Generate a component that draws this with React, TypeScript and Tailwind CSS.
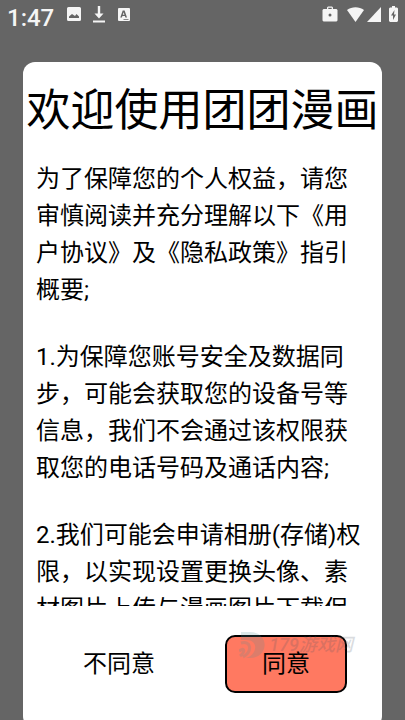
const paragraphs = [
  "为了保障您的个人权益，请您审慎阅读并充分理解以下《用户协议》及《隐私政策》指引概要;",
  "1.为保障您账号安全及数据同步，可能会获取您的设备号等信息，我们不会通过该权限获取您的电话号码及通话内容;",
  "2.我们可能会申请相册(存储)权限，以实现设置更换头像、素材图片上传与漫画图片下载保",
];

function StatusBar() {
  return (
    <header className="flex h-7 shrink-0 items-center justify-between px-[7px] text-[#f5f5f5]">
      <div className="flex items-center">
        <span className="w-[46px] pt-2 text-2xl leading-6 font-medium">1:47</span>
        <svg className="ml-[14px] h-[14px] w-[14px]" viewBox="0 0 14 14" fill="currentColor">
          <path fillRule="evenodd" d="M1.5 0h11A1.5 1.5 0 0 1 14 1.5v11a1.5 1.5 0 0 1-1.5 1.5h-11A1.5 1.5 0 0 1 0 12.5v-11A1.5 1.5 0 0 1 1.5 0zM2 11h10V9.500L9.500 7 8 9 6.500 8 5 7 2 9.500z" />
        </svg>
        <svg className="ml-3 h-[17px] w-[12px]" viewBox="0 0 12 17" fill="currentColor">
          <path d="M4.800 0h2.400v7.500H10.500L6 12.500 1.500 7.500h3.300zM0 14.500h12v2H0z" />
        </svg>
        <svg className="ml-[13px] h-[13px] w-[12px]" viewBox="0 0 12 13" fill="currentColor">
          <path fillRule="evenodd" d="M1 0h10a1 1 0 0 1 1 1v11a1 1 0 0 1-1 1H1a1 1 0 0 1-1-1V1a1 1 0 0 1 1-1zM4.700 2.500 2.300 9.500h1.600l.5-1.600h2.500l.5 1.600H9L6.600 2.500zM5.600 4.300l.9 2.400H4.800zM5.500 11v.8h5V11z" />
        </svg>
      </div>
      <div className="flex items-center">
        <svg className="h-4 w-4" viewBox="0 0 16 16" fill="currentColor">
          <path fillRule="evenodd" d="M5 3V1.500L6 .5h4l1 1V3h3.500l1 1v10.500l-1 1h-13l-1-1V4l1-1zM6.300 3h3.400V1.800H6.300zM8 7.500a1.500 1.500 0 1 0 0 3 1.500 1.500 0 0 0 0-3z" />
        </svg>
        <svg className="ml-[9px] h-[15px] w-[17px]" viewBox="0 0 17 15" fill="currentColor">
          <path d="M0 3C5-.8 12-.8 17 3L8.500 15z" />
        </svg>
        <svg className="ml-[3px] h-[15px] w-[14px]" viewBox="0 0 14 15" fill="currentColor">
          <path d="M14 0v15H0z" />
        </svg>
        <svg className="ml-2 h-4 w-[9px]" viewBox="0 0 9 16" fill="currentColor">
          <path fillRule="evenodd" d="M3 0h3v1.500h2l1 1V15l-1 1H1l-1-1V2.500l1-1h2zM5.500 4 2 9.500h2V14l3-5.500H5z" />
        </svg>
      </div>
    </header>
  );
}

function Watermark() {
  return (
    <div className="pointer-events-none absolute -top-1 right-[29px] flex items-center gap-1 text-gray-600 opacity-20">
      <svg className="h-7 w-[26px]" viewBox="0 0 26 28">
        <path d="M2 1h9c20 0 19 26 0 26H7c12-4 13-19-1-18H2z" fill="#4f8f94" />
        <path d="M2 12c10-3 12 8 2 14M0 20c5-4 7 0 1 5" fill="none" stroke="#4f8f94" strokeWidth="3" />
      </svg>
      <span className="text-lg leading-7 font-medium italic">179游戏网</span>
    </div>
  );
}

export default function App() {
  return (
    <div
      lang="zh-CN"
      className="flex h-screen flex-col overflow-hidden bg-[#656565] font-['Roboto','Noto_Sans_CJK_SC',sans-serif] text-black"
    >
      <StatusBar />
      <main className="mx-[23px] mt-[34px] -mb-2 flex min-h-0 flex-1 flex-col rounded-xl bg-white">
        <h1 className="pt-[19px] text-center text-[44px] leading-[60px] whitespace-nowrap">欢迎使用团团漫画</h1>
        <div className="mt-5 min-h-0 flex-1 space-y-[30px] overflow-hidden px-[13px] text-2xl leading-[37px]">
          {paragraphs.map((text) => (
            <p key={text}>{text}</p>
          ))}
        </div>
        <div className="relative mt-[29px] mb-[35px] flex justify-between px-[35px] text-2xl">
          <button type="button" className="h-[58px] w-[122px] rounded-[10px]">
            不同意
          </button>
          <button type="button" className="h-[58px] w-[122px] rounded-[10px] border-2 border-black bg-[#ff7961]">
            同意
          </button>
          <Watermark />
        </div>
      </main>
    </div>
  );
}
